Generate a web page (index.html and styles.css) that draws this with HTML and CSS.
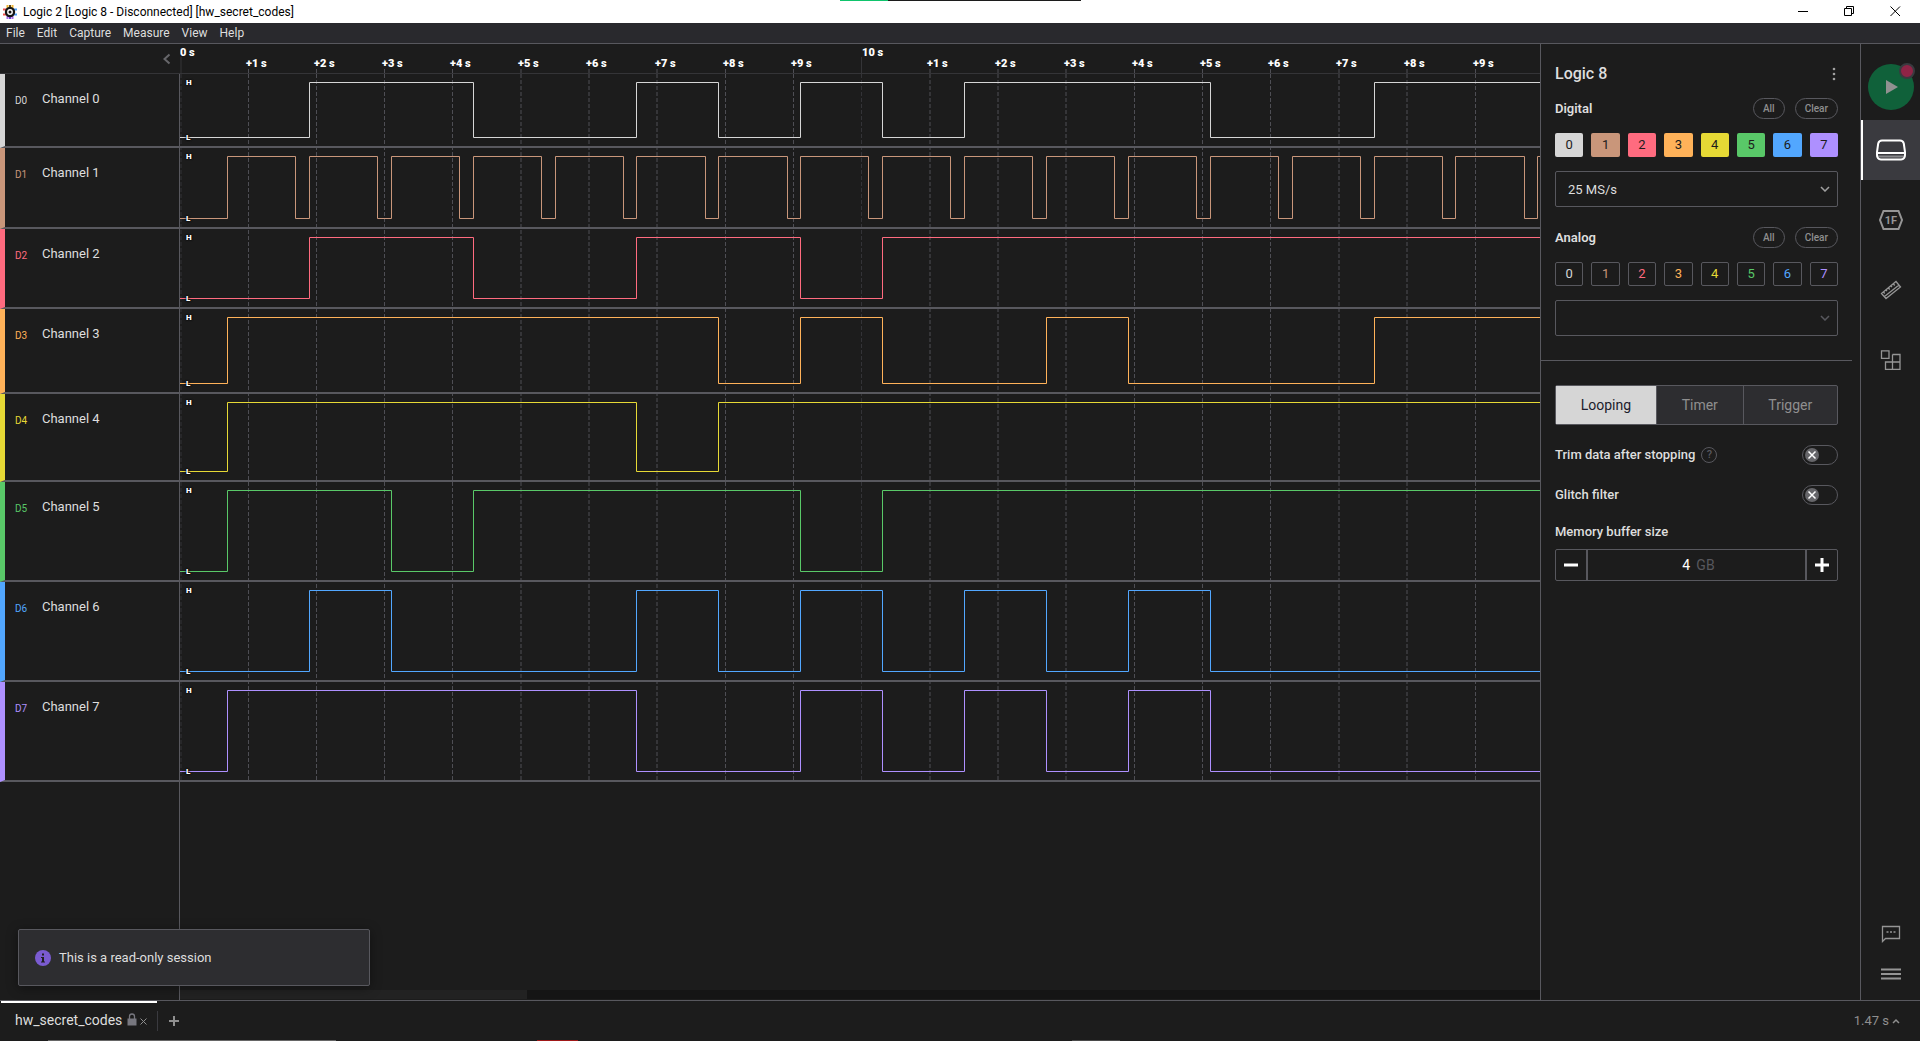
FILE: index.html
```html
<!DOCTYPE html>
<html lang="en">
<head>
<meta charset="utf-8">
<title>Logic 2 [Logic 8 - Disconnected] [hw_secret_codes]</title>
<link rel="stylesheet" href="styles.css">
</head>
<body>
<div class="app">
  <header class="titlebar">
    <svg class="app-icon" width="14" height="14" viewBox="0 0 14 14" aria-hidden="true">
      <g stroke-width="2">
        <path d="M4.500 0v3M9.500 0v3" stroke="#f2b632"/><path d="M7 0v3" stroke="#5a4a20"/>
        <path d="M4.500 11v3M9.500 11v3" stroke="#a56be8"/><path d="M7 11v3" stroke="#6c3fd0"/>
        <path d="M0 4.500h3M0 9.500h3" stroke="#f0524f"/><path d="M11 4.500h3M11 9.500h3" stroke="#4c9df5"/>
      </g>
      <circle cx="7" cy="7" r="5.200" fill="#151515"/>
      <circle cx="7" cy="7" r="2.200" fill="none" stroke="#fff" stroke-width="1.400"/>
    </svg>
    <span class="window-title">Logic 2 [Logic 8 - Disconnected] [hw_secret_codes]</span>
    <div class="share-strip"></div>
    <div class="window-buttons">
      <button type="button" aria-label="Minimize"><svg width="11" height="11" viewBox="0 0 11 11"><path d="M0 5.500h10"/></svg></button>
      <button type="button" aria-label="Restore"><svg width="11" height="11" viewBox="0 0 11 11"><path d="M.5 2.500h7v7h-7zM2.500 2.500v-2h7v7h-2"/></svg></button>
      <button type="button" aria-label="Close"><svg width="11" height="11" viewBox="0 0 11 11"><path d="M.5 .5l9.500 9.500M10 .5L.5 10"/></svg></button>
    </div>
  </header>
  <nav class="menubar">
    <button type="button">File</button><button type="button">Edit</button><button type="button">Capture</button><button type="button">Measure</button><button type="button">View</button><button type="button">Help</button>
  </nav>

  <main class="workspace">
    <section class="capture">
      <div class="ruler">
        <div class="ruler-side"><button type="button" class="collapse" aria-label="Collapse"><svg width="8" height="12" viewBox="0 0 8 12"><path d="M6.500 1.500L1.500 6l5 4.500"/></svg></button></div>
        <svg class="ruler-scale">
          <path class="major" d="M1 13v16M681.500 13v16"/>
          <path class="tick" d="M68.500 25v4M136.500 25v4M204.500 25v4M272.500 25v4M341 25v4M409 25v4M477 25v4M545.500 25v4M613.500 25v4M750 25v4M818 25v4M886 25v4M954.500 25v4M1022.500 25v4M1090.500 25v4M1159 25v4M1227 25v4M1295.500 25v4"/>
          <g class="times">
            <text x="0" y="12">0 s</text><text x="66" y="23">+1 s</text><text x="134" y="23">+2 s</text><text x="202" y="23">+3 s</text><text x="270" y="23">+4 s</text><text x="338" y="23">+5 s</text><text x="406" y="23">+6 s</text><text x="475" y="23">+7 s</text><text x="543" y="23">+8 s</text><text x="611" y="23">+9 s</text>
            <text x="682" y="12">10 s</text><text x="747" y="23">+1 s</text><text x="815" y="23">+2 s</text><text x="884" y="23">+3 s</text><text x="952" y="23">+4 s</text><text x="1020" y="23">+5 s</text><text x="1088" y="23">+6 s</text><text x="1156" y="23">+7 s</text><text x="1224" y="23">+8 s</text><text x="1293" y="23">+9 s</text>
          </g>
        </svg>
      </div>

      <div class="channels">
        <svg class="gridlines" aria-hidden="true">
          <path class="faint" d="M1 0V1200M681.500 0V1200"/>
          <path d="M68.500 0V1200M136.500 0V1200M204.500 0V1200M272.500 0V1200M341 0V1200M409 0V1200M477 0V1200M545.500 0V1200M613.500 0V1200M750 0V1200M818 0V1200M886 0V1200M954.500 0V1200M1022.500 0V1200M1090.500 0V1200M1159 0V1200M1227 0V1200M1295.500 0V1200"/>
        </svg>
        <div class="channel c0 h74"><div class="label"><span class="id">D0</span><span class="name">Channel 0</span></div>
          <div class="plot"><svg><path d="M0 63.500H129.500V8.500H293.500V63.500H456.500V8.500H538.500V63.500H620.500V8.500H702.500V63.500H784.500V8.500H1030.500V63.500H1194.500V8.500H3000"/></svg><span>H</span><span>L</span></div></div>
        <div class="channel c1 h81"><div class="label"><span class="id">D1</span><span class="name">Channel 1</span></div>
          <div class="plot"><svg><path d="M0 70.500H47.500V8.500H115.500V70.500H129.500V8.500H197.500V70.500H211.500V8.500H279.500V70.500H293.500V8.500H361.500V70.500H375.500V8.500H443.500V70.500H456.500V8.500H525.500V70.500H538.500V8.500H607.500V70.500H620.500V8.500H688.500V70.500H702.500V8.500H770.500V70.500H784.500V8.500H852.500V70.500H866.500V8.500H934.500V70.500H948.500V8.500H1016.500V70.500H1030.500V8.500H1098.500V70.500H1112.500V8.500H1180.500V70.500H1194.500V8.500H1262.500V70.500H1275.500V8.500H1344.500V70.500H1357.500V8.500H1425.500V70.500H3000"/></svg><span>H</span><span>L</span></div></div>
        <div class="channel c2 h80"><div class="label"><span class="id">D2</span><span class="name">Channel 2</span></div>
          <div class="plot"><svg><path d="M0 69.500H129.500V8.500H293.500V69.500H456.500V8.500H620.500V69.500H702.500V8.500H3000"/></svg><span>H</span><span>L</span></div></div>
        <div class="channel c3 h85"><div class="label"><span class="id">D3</span><span class="name">Channel 3</span></div>
          <div class="plot"><svg><path d="M0 74.500H47.500V8.500H538.500V74.500H620.500V8.500H702.500V74.500H866.500V8.500H948.500V74.500H1194.500V8.500H3000"/></svg><span>H</span><span>L</span></div></div>
        <div class="channel c4 h88"><div class="label"><span class="id">D4</span><span class="name">Channel 4</span></div>
          <div class="plot"><svg><path d="M0 77.500H47.500V8.500H456.500V77.500H538.500V8.500H3000"/></svg><span>H</span><span>L</span></div></div>
        <div class="channel c5 h100"><div class="label"><span class="id">D5</span><span class="name">Channel 5</span></div>
          <div class="plot"><svg><path d="M0 89.500H47.500V8.500H211.500V89.500H293.500V8.500H620.500V89.500H702.500V8.500H3000"/></svg><span>H</span><span>L</span></div></div>
        <div class="channel c6 h100"><div class="label"><span class="id">D6</span><span class="name">Channel 6</span></div>
          <div class="plot"><svg><path d="M0 89.500H129.500V8.500H211.500V89.500H456.500V8.500H538.500V89.500H620.500V8.500H702.500V89.500H784.500V8.500H866.500V89.500H948.500V8.500H1030.500V89.500H3000"/></svg><span>H</span><span>L</span></div></div>
        <div class="channel c7 h100"><div class="label"><span class="id">D7</span><span class="name">Channel 7</span></div>
          <div class="plot"><svg><path d="M0 89.500H47.500V8.500H456.500V89.500H620.500V8.500H702.500V89.500H784.500V8.500H866.500V89.500H948.500V8.500H1030.500V89.500H3000"/></svg><span>H</span><span>L</span></div></div>
      </div>
      <div class="empty"><div class="empty-side"></div><div class="empty-plot"><div class="hscroll"><div class="thumb"></div></div></div></div>
      <div class="toast" role="status">
        <svg width="16" height="16" viewBox="0 0 16 16" aria-hidden="true"><circle cx="8" cy="8" r="8" fill="#7a5bd1"/><path d="M7 3.500h2v2H7zM6 7h3v4.500h1v1H6v-1h1V8H6z" fill="#1f1f20"/></svg>
        <span>This is a read-only session</span>
      </div>
    </section>

    <aside class="device">
      <div class="device-top">
        <div class="line title-line"><h1>Logic 8</h1><button type="button" class="more" aria-label="More"><svg width="4" height="14" viewBox="0 0 4 14"><circle cx="2" cy="2" r="1.300"/><circle cx="2" cy="7" r="1.300"/><circle cx="2" cy="12" r="1.300"/></svg></button></div>
        <div class="line group-line"><h2>Digital</h2><button type="button" class="pill">All</button><button type="button" class="pill">Clear</button></div>
        <div class="chips filled">
          <button type="button" class="c0">0</button><button type="button" class="c1">1</button><button type="button" class="c2">2</button><button type="button" class="c3">3</button><button type="button" class="c4">4</button><button type="button" class="c5">5</button><button type="button" class="c6">6</button><button type="button" class="c7">7</button>
        </div>
        <div class="picker"><select aria-label="Digital sample rate"><option>25 MS/s</option></select><svg width="10" height="6" viewBox="0 0 10 6"><path d="M1 1l4 4 4-4"/></svg></div>
        <div class="line group-line"><h2>Analog</h2><button type="button" class="pill">All</button><button type="button" class="pill">Clear</button></div>
        <div class="chips outlined">
          <button type="button" class="c0">0</button><button type="button" class="c1">1</button><button type="button" class="c2">2</button><button type="button" class="c3">3</button><button type="button" class="c4">4</button><button type="button" class="c5">5</button><button type="button" class="c6">6</button><button type="button" class="c7">7</button>
        </div>
        <div class="picker off"><select aria-label="Analog sample rate" disabled><option></option></select><svg width="10" height="6" viewBox="0 0 10 6"><path d="M1 1l4 4 4-4"/></svg></div>
      </div>
      <div class="device-bottom">
        <div class="modes"><button type="button" class="on">Looping</button><button type="button">Timer</button><button type="button">Trigger</button></div>
        <div class="line switch-line"><label for="trim">Trim data after stopping</label><button type="button" class="help" aria-label="Help on trimming">?</button>
          <span class="switch"><input type="checkbox" id="trim"><svg width="14" height="14" viewBox="0 0 14 14"><circle cx="7" cy="7" r="7"/><path d="M3.500 3.500l7 7M10.500 3.500l-7 7"/></svg></span></div>
        <div class="line switch-line"><label for="glitch">Glitch filter</label>
          <span class="switch"><input type="checkbox" id="glitch"><svg width="14" height="14" viewBox="0 0 14 14"><circle cx="7" cy="7" r="7"/><path d="M3.500 3.500l7 7M10.500 3.500l-7 7"/></svg></span></div>
        <label class="buffer-label" for="buffer">Memory buffer size</label>
        <div class="stepper">
          <button type="button" aria-label="Decrease"><svg width="14" height="14" viewBox="0 0 14 14"><path d="M0 7h14"/></svg></button>
          <div class="value"><input id="buffer" type="text" value="4"><span>GB</span></div>
          <button type="button" aria-label="Increase"><svg width="14" height="14" viewBox="0 0 14 14"><path d="M0 7h14M7 0v14"/></svg></button>
        </div>
      </div>
    </aside>

    <nav class="rail">
      <button type="button" class="play" aria-label="Start capture"><svg width="14" height="14" viewBox="0 0 14 14"><path d="M1 0v14l12-7z" fill="#919191"/></svg><i></i></button>
      <button type="button" class="tool active" aria-label="Device"><svg width="32" height="22" viewBox="0 0 32 22"><path d="M7 1.500h18q3 0 3.800 3l1.200 8.500v3q0 4-4 4.500H6q-4-.5-4-4.500v-3l1.200-8.500q.8-3 3.800-3z"/><path d="M2 14h28"/><path d="M3 17.500h26" opacity=".4"/></svg></button>
      <button type="button" class="tool" aria-label="Analyzers"><svg width="24" height="20" viewBox="0 0 24 20"><path d="M4.500 1h15L23 10l-3.500 9h-15L1 10z"/><text x="12" y="14">1F</text></svg></button>
      <button type="button" class="tool" aria-label="Measurements"><svg class="thin" width="22" height="20" viewBox="0 0 22 20"><path d="M1.500 13.500L16 1.500l4.500 5.500L6 18.500zM4.500 16.500l14.500-11.500M3.500 12l1.200 1.500M6 10l1 1.200M8.500 8l1.200 1.500M11 6l1 1.200M13.500 4l1.200 1.500"/></svg></button>
      <button type="button" class="tool" aria-label="Extensions"><svg class="thin" width="22" height="20" viewBox="0 0 22 20"><path d="M1.500 .8h7.500v7.500H1.500zM12.500 4.500h7.500v15H5.500v-7.500h14.500M12.500 4.500v15"/></svg></button>
      <div class="rail-bottom">
        <button type="button" aria-label="Feedback"><svg class="thin" width="20" height="18" viewBox="0 0 20 18"><path d="M1.500 1.500h17v12h-14l-3 3z"/><path d="M5.500 7h2M9 7h2M12.500 7h2"/></svg></button>
        <button type="button" aria-label="Menu"><svg width="20" height="12" viewBox="0 0 20 12"><path d="M0 1.500h20M0 6h20M0 10.500h20"/></svg></button>
      </div>
    </nav>
  </main>

  <footer class="tabs">
    <div class="tab"><a href="#session">hw_secret_codes</a>
      <svg width="10" height="13" viewBox="0 0 10 13" aria-hidden="true"><path d="M2.500 6V3.500a2.500 2.500 0 0 1 5 0V6" fill="none" stroke="#77777f" stroke-width="1.300"/><path d="M.5 5.500h9v7h-9z" fill="#77777f"/></svg>
      <button type="button" aria-label="Close tab"><svg width="7" height="7" viewBox="0 0 7 7"><path d="M.5 .5l6 6M6.500 .5l-6 6"/></svg></button></div>
    <button type="button" class="add" aria-label="New tab"><svg width="10" height="10" viewBox="0 0 10 10"><path d="M0 5h10M5 0v10"/></svg></button>
    <button type="button" class="elapsed">1.47 s<svg width="8" height="6" viewBox="0 0 8 6"><path d="M1 5l3-3 3 3"/></svg></button>
  </footer>
  <div class="taskbar-edge"></div>
</div>
</body>
</html>
```
FILE: styles.css
```css
* { box-sizing: border-box; }
:root {
  --bg: #1c1c1c;
  --line: #58585e;
  --dim: #8f8f8f;
  --text: #dedede;
}
body {
  margin: 0;
  background: var(--bg);
  color: var(--text);
  font: 13px/16px Roboto, sans-serif;
}
button {
  margin: 0;
  padding: 0;
  border: 0;
  background: none;
  color: inherit;
  font: inherit;
}
svg { display: block; flex: none; }
.c0 { --c: #d6d6d6; }
.c1 { --c: #c9967a; }
.c2 { --c: #ff6b7f; }
.c3 { --c: #ffb259; }
.c4 { --c: #e6d935; }
.c5 { --c: #59c868; }
.c6 { --c: #52a7ff; }
.c7 { --c: #ae90ff; }

.app { display: flex; flex-direction: column; min-height: 100vh; }

/* window chrome */
.titlebar {
  position: relative;
  display: flex;
  align-items: center;
  height: 23px;
  padding: 0 2px 0 3px;
  background: #fff;
  color: #000;
  font: 12px/16px Roboto, sans-serif;
}
.window-title { margin-left: 6px; flex: 1; }
.share-strip {
  position: absolute;
  top: 0;
  left: 840px;
  width: 241px;
  height: 1px;
  background: linear-gradient(90deg, #0fc46c 48px, #1c1c1c 48px);
}
.window-buttons { display: flex; }
.window-buttons button { width: 46px; height: 20px; display: grid; place-items: center; }
.window-buttons path { fill: none; stroke: #000; }
.menubar {
  display: flex;
  gap: 12px;
  height: 21px;
  padding-left: 6px;
  background: #29292d;
  border-bottom: 1px solid var(--line);
  font: 12px/20px Roboto, sans-serif;
}

.workspace { flex: 1; display: flex; }
.capture { position: relative; flex: 1; min-width: 0; display: flex; flex-direction: column; }

/* time ruler */
.ruler { display: flex; height: 30px; border-bottom: 1px solid #343437; }
.ruler-side { width: 180px; flex: none; display: flex; justify-content: flex-end; align-items: center; padding-right: 9px; }
.collapse path { fill: none; stroke: #66666a; stroke-width: 2; }
.ruler-scale { flex: 1; min-width: 0; height: 29px; overflow: hidden; }
.ruler-scale .major { stroke: #343437; }
.ruler-scale .tick { stroke: #4e4e54; }
.times text { fill: #fff; font: 900 11px Roboto, sans-serif; }

/* channels */
.channels { position: relative; }
.gridlines { position: absolute; left: 180px; top: 0; width: calc(100% - 180px); height: 100%; overflow: hidden; }
.gridlines path { stroke: #4e4e54; stroke-dasharray: 4 2; }
.gridlines .faint { stroke: #333337; }
.channel { position: relative; display: flex; }
.h74 { height: 74px; }
.h81 { height: 81px; }
.h80 { height: 80px; }
.h85 { height: 85px; }
.h88 { height: 88px; }
.h100 { height: 100px; }
.label {
  width: 180px;
  flex: none;
  display: flex;
  padding: 17px 0 0 10px;
  border-left: 5px solid var(--c);
  border-right: 1px solid var(--line);
  border-bottom: 2px solid var(--line);
}
.id { width: 27px; padding-top: 2px; color: var(--c); font-size: 10px; }
.plot {
  flex: 1;
  min-width: 0;
  display: flex;
  flex-direction: column;
  justify-content: space-between;
  padding: 3px 0 3px 6px;
  border-bottom: 2px solid var(--line);
}
.plot svg { position: absolute; left: 180px; top: 0; width: calc(100% - 180px); height: 100%; overflow: hidden; }
.plot path { fill: none; stroke: var(--c); }
.plot span {
  position: relative;
  color: #fff;
  font: 900 8px/11px Roboto, sans-serif;
  text-shadow: 0 0 2px #000, 0 0 2px #000;
}
.empty { flex: 1; display: flex; }
.empty-side { width: 180px; flex: none; border-right: 1px solid var(--line); }
.empty-plot { flex: 1; display: flex; align-items: flex-end; }
.hscroll { flex: 1; height: 9px; margin-bottom: 1px; background: #151515; }
.thumb { width: 347px; height: 9px; background: #222; }
.toast {
  position: absolute;
  left: 18px;
  bottom: 14px;
  display: flex;
  align-items: center;
  gap: 8px;
  width: 352px;
  height: 57px;
  padding: 0 16px;
  background: #2d2d30;
  border: 1px solid var(--line);
  border-radius: 2px;
  box-shadow: 0 2px 12px rgba(0, 0, 0, .4);
}

/* device panel */
.device { width: 320px; flex: none; border-left: 1px solid var(--line); }
.device-top { margin-right: 8px; padding: 16px 14px 24px; border-bottom: 1px solid var(--line); }
.device-bottom { padding: 24px 22px 0 14px; }
.line { display: flex; align-items: center; }
h1, h2 { margin: 0; flex: 1; font-weight: 500; }
h1 { font-size: 16px; }
h2 { font-size: 13px; font-weight: 600; }
.title-line { height: 28px; }
.more { width: 6px; }
.more svg { fill: #a0a0a0; }
.group-line { height: 21px; margin: 10px 0 14px; gap: 10px; }
.picker + .group-line { margin-top: 20px; }
.pill {
  height: 21px;
  padding: 0 9px;
  border: 1px solid var(--line);
  border-radius: 11px;
  color: var(--dim);
  font-size: 10px;
  font-weight: 500;
}
.chips { display: grid; grid-template-columns: repeat(8, 1fr); gap: 8px; }
.chips button { height: 24px; border-radius: 2px; font-size: 13px; }
.filled button { background: var(--c); color: #1c1c1c; }
.outlined button { border: 1px solid var(--line); color: var(--c); }
.picker { position: relative; margin-top: 14px; }
.picker select {
  display: block;
  width: 100%;
  height: 36px;
  padding: 0 12px;
  appearance: none;
  border: 1px solid var(--line);
  border-radius: 2px;
  background: none;
  color: var(--text);
  opacity: 1;
  font: 13px Roboto, sans-serif;
}
.picker svg { position: absolute; right: 8px; top: 15px; fill: none; stroke: #a0a0a0; stroke-width: 1.500; }
.picker.off svg { stroke: #58585e; }
.modes { display: flex; height: 40px; border: 1px solid var(--line); border-radius: 2px; background: #2d2d30; color: var(--dim); font-size: 14px; }
.modes button { flex: 1 1 auto; border-left: 1px solid var(--line); }
.modes button.on { background: #d6d6d6; color: #1c1c2c; border: 0; }
.switch-line { height: 20px; margin-top: 20px; font-weight: 500; }
.help { width: 16px; height: 16px; margin-left: 6px; border: 1px solid #58585e; border-radius: 50%; color: #58585e; font-size: 11px; line-height: 14px; }
.switch { position: relative; margin-left: auto; }
.switch input { display: block; appearance: none; width: 36px; height: 20px; margin: 0; border: 1px solid var(--line); border-radius: 10px; }
.switch svg { position: absolute; left: 3px; top: 3px; pointer-events: none; fill: #66666a; stroke: #fff; stroke-width: 1.500; }
.switch circle { stroke: none; }
.buffer-label { display: block; margin: 19px 0 9px; font-weight: 500; }
.stepper { display: flex; height: 32px; border: 1px solid var(--line); border-radius: 2px; }
.stepper button { width: 30px; display: grid; place-items: center; }
.stepper path { stroke: #fff; stroke-width: 3; }
.value { flex: 1; display: flex; align-items: center; justify-content: center; gap: 5px; padding-left: 4px; border: solid var(--line); border-width: 0 2px; font-size: 14px; }
.value input { width: 9px; padding: 0; border: 0; background: none; color: #fff; font: 14px Roboto, sans-serif; }
.value span { color: #58585e; }

/* tool rail */
.rail { width: 60px; flex: none; display: flex; flex-direction: column; border-left: 1px solid var(--line); }
.play { position: relative; align-self: center; width: 46px; height: 46px; margin: 20px 0 10px; border-radius: 50%; background: #10613a; display: grid; place-items: center; }
.play svg { margin-left: 3px; }
.play i { position: absolute; right: -1px; top: -1px; width: 16px; height: 16px; border: 2px solid #3a3a3f; border-radius: 50%; background: #8f2446; }
.tool { height: 60px; margin-bottom: 10px; display: grid; place-items: center; }
.tool.active { background: #3a3a3f; box-shadow: inset 2px 0 #fff; }
.rail svg { fill: none; stroke: #959595; stroke-width: 2; }
.rail .play svg, .rail text { stroke: none; }
.rail .active svg { stroke: #fff; }
.rail svg.thin { stroke-width: 1.300; }
.rail text { fill: #959595; font: 700 11px Roboto, sans-serif; text-anchor: middle; }
.rail-bottom { margin: auto 0 6px; display: flex; flex-direction: column; }
.rail-bottom button { height: 40px; display: grid; place-items: center; }

/* session tabs */
.tabs { display: flex; align-items: center; height: 40px; padding: 0 20px 0 1px; border-top: 1px solid var(--line); color: var(--dim); }
.tab { display: flex; align-items: center; align-self: stretch; width: 156px; padding: 0 0 4px 14px; border-top: 2px solid #fff; }
.tab a { color: var(--text); font-size: 14px; text-decoration: none; margin-right: 5px; }
.tab button { margin: 3px 0 0 3px; }
.tabs button svg { fill: none; stroke: #8f8f8f; }
.add { height: 20px; padding: 0 11px; border-left: 1px solid #3a3a3f; }
.add path { stroke-width: 2; }
.elapsed { display: flex; align-items: center; gap: 3px; margin-left: auto; font-size: 13px; }
.elapsed path { stroke-width: 1.500; }
.taskbar-edge {
  height: 1px;
  background: linear-gradient(90deg, transparent 48px, #666 48px 336px, transparent 336px 537px, #a01818 537px 578px, transparent 578px 1072px, #4a4a4a 1072px 1120px, transparent 1120px);
}
```
